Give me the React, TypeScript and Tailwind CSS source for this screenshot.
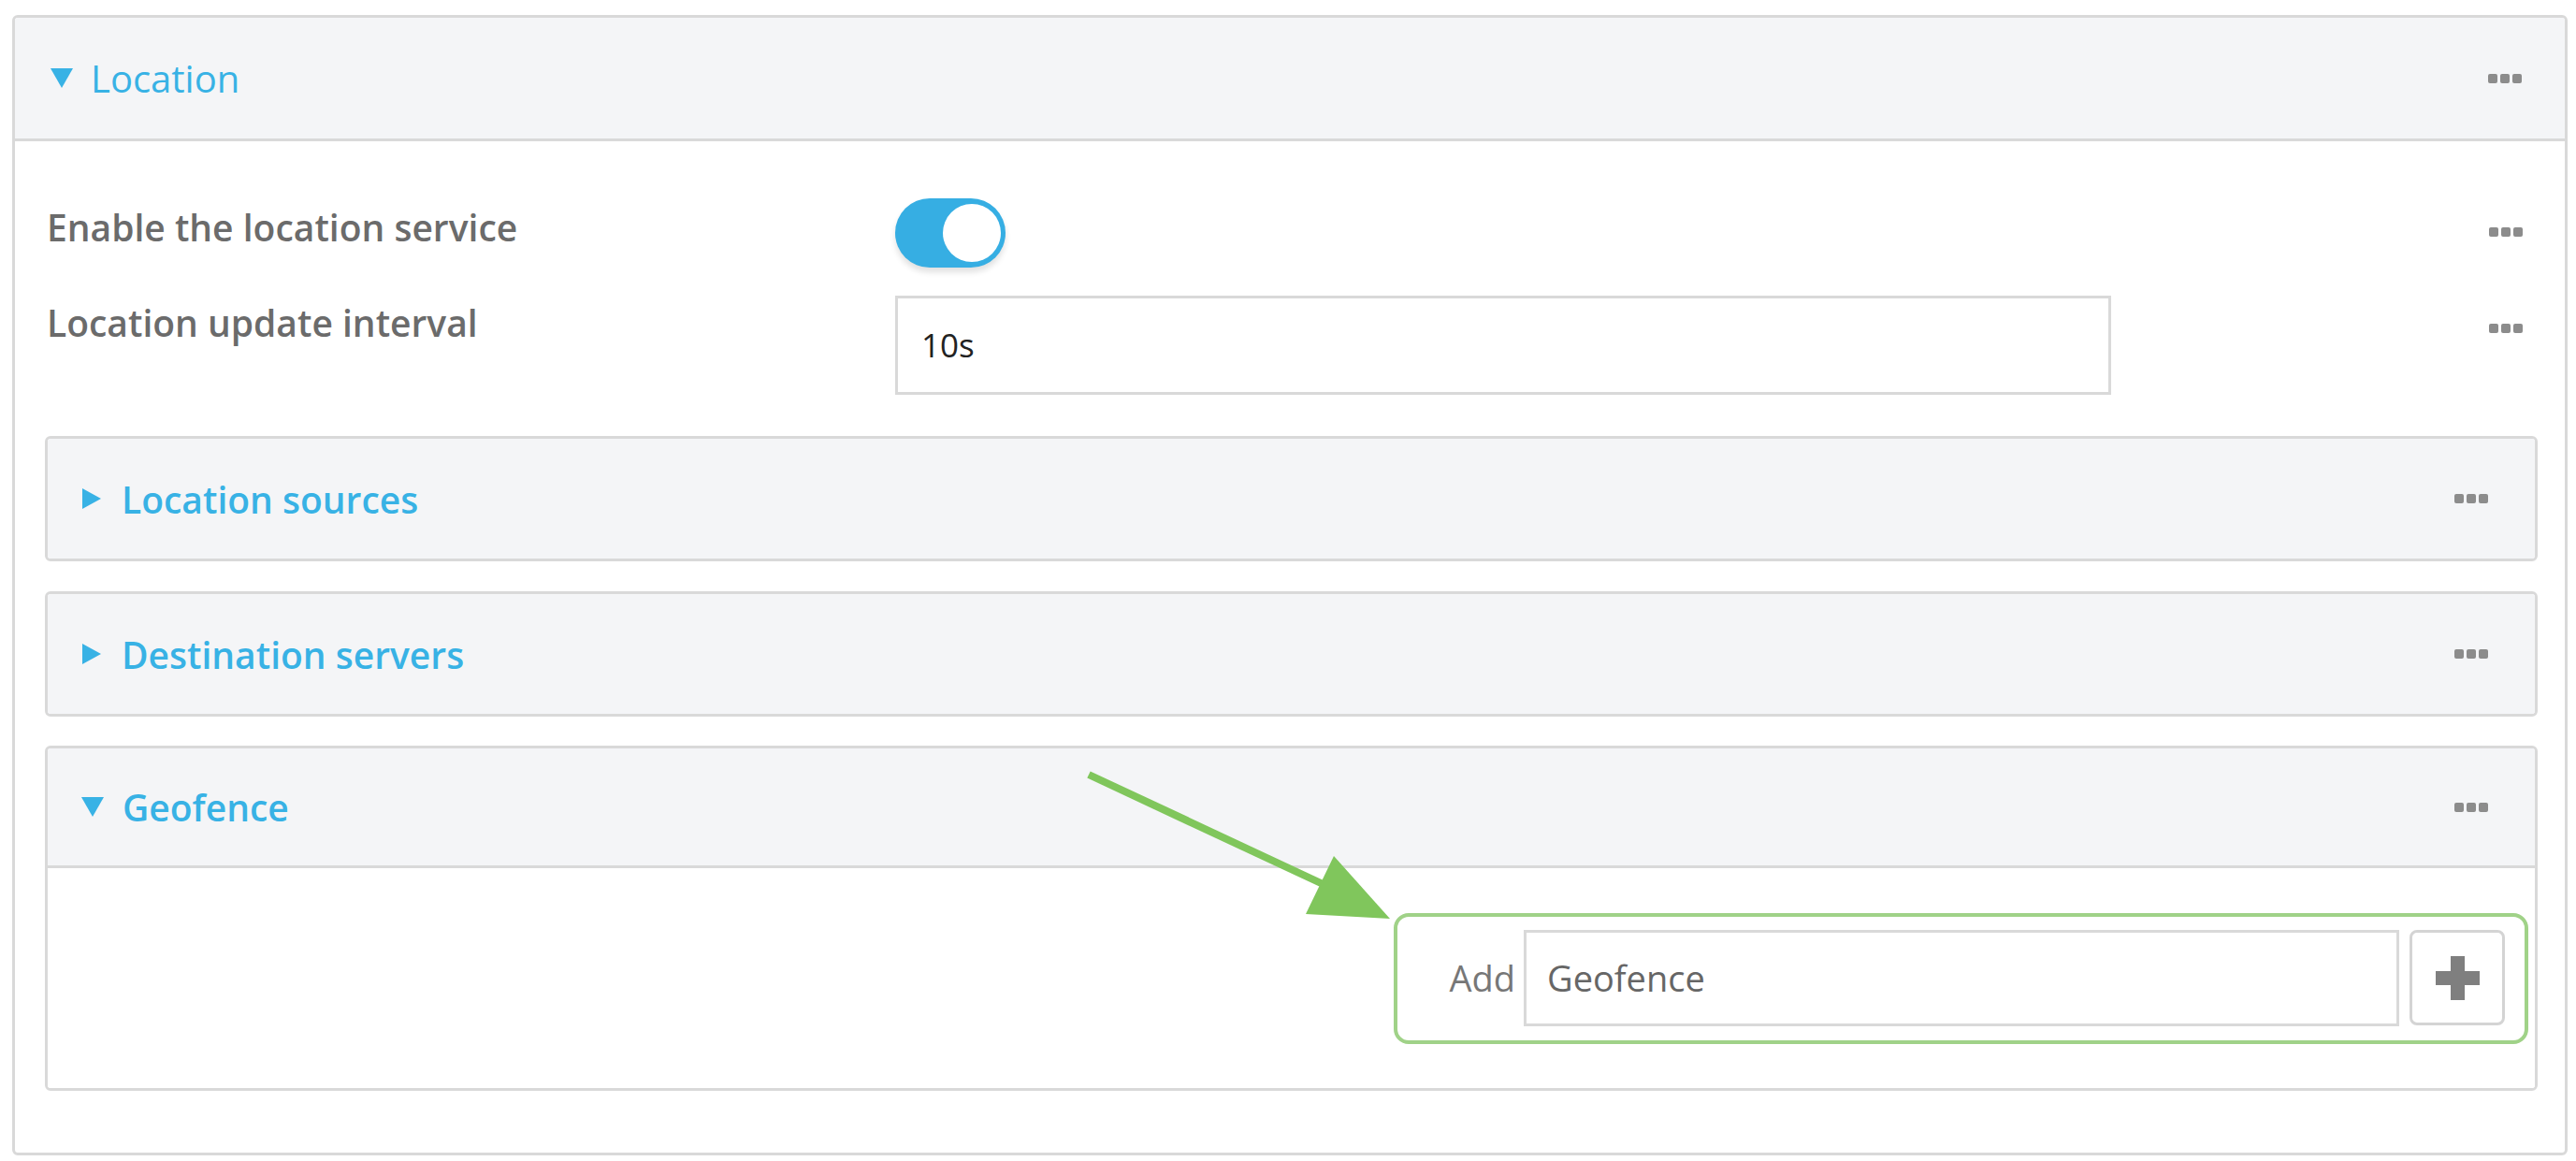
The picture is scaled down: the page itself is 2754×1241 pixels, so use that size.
import React from 'react'

function Dots() {
  return (
    <div className="flex gap-[3px]">
      <span className="w-[10px] h-[10px] rounded-[2px] bg-[#8c8c8c]" />
      <span className="w-[10px] h-[10px] rounded-[2px] bg-[#8c8c8c]" />
      <span className="w-[10px] h-[10px] rounded-[2px] bg-[#8c8c8c]" />
    </div>
  )
}

function Caret({ open }: { open: boolean }) {
  if (open) {
    return (
      <svg width="24" height="21" viewBox="0 0 24 21" className="shrink-0">
        <polygon points="0,0 24,0 12,21" fill="#38b2e5" />
      </svg>
    )
  }
  return (
    <svg width="20" height="22" viewBox="0 0 20 22" className="shrink-0 ml-[1px]">
      <polygon points="0,0 20,11 0,22" fill="#38b2e5" />
    </svg>
  )
}

function SubHeader({ title, open }: { title: string; open: boolean }) {
  return (
    <div
      className={`h-[128px] flex items-center bg-[#f4f5f7] pl-[36px] pr-[50px] ${
        open ? 'border-b-[3px] border-[#d9d9d9]' : ''
      }`}
    >
      <Caret open={open} />
      <span className={`${open ? 'ml-[20px]' : 'ml-[22px]'} text-[39px] font-semibold text-[#38b2e5] leading-none`}>
        {title}
      </span>
      <div className="ml-auto">
        <Dots />
      </div>
    </div>
  )
}

export default function App() {
  return (
    <div className="relative w-[2754px] h-[1241px] bg-white font-['Open_Sans',sans-serif] pt-[16px] pl-[13px]">
      <div className="w-[2732px] border-[3px] border-[#d9d9d9] rounded-[6px] overflow-hidden">
        {/* Location header */}
        <div className="h-[132px] flex items-center bg-[#f4f5f7] border-b-[3px] border-[#d9d9d9] pl-[38px] pr-[46px]">
          <Caret open />
          <span className="ml-[19px] text-[40px] text-[#38b2e5] leading-none">Location</span>
          <div className="ml-auto">
            <Dots />
          </div>
        </div>

        {/* Body */}
        <div className="pt-[61px] pl-[32px] pr-[29px] pb-[66px]">
          <div className="flex items-start h-[74px]">
            <div className="w-[909px] pl-[2px] pt-[4px] text-[39px] leading-[54px] font-semibold text-[#6b6b6b]">
              Enable the location service
            </div>
            <div className="relative w-[118px] h-[74px] rounded-full bg-[#36aee3] shadow-[0_5px_6px_rgba(0,0,0,0.12)]">
              <div className="absolute right-[5px] top-[6px] w-[62px] h-[62px] rounded-full bg-white" />
            </div>
            <div className="ml-auto mt-[31px] mr-[16px]">
              <Dots />
            </div>
          </div>

          <div className="flex items-start mt-[30px]">
            <div className="w-[909px] pl-[2px] pt-[2px] text-[39px] leading-[54px] font-semibold text-[#6b6b6b]">
              Location update interval
            </div>
            <div className="w-[1300px] h-[106px] border-[3px] border-[#d9d9d9] flex items-center pl-[25px] text-[35px] text-[#222]">
              10s
            </div>
            <div className="ml-auto mt-[30px] mr-[16px]">
              <Dots />
            </div>
          </div>

          {/* Location sources */}
          <div className="mt-[44px] border-[3px] border-[#d9d9d9] rounded-[6px] overflow-hidden">
            <SubHeader title="Location sources" open={false} />
          </div>

          {/* Destination servers */}
          <div className="mt-[32px] border-[3px] border-[#d9d9d9] rounded-[6px] overflow-hidden">
            <SubHeader title="Destination servers" open={false} />
          </div>

          {/* Geofence */}
          <div className="mt-[31px] border-[3px] border-[#d9d9d9] rounded-[6px] overflow-hidden">
            <SubHeader title="Geofence" open />
            <div className="h-[235px] bg-white flex items-center justify-end pr-[7px]">
              <div className="flex items-center border-4 border-[#a0d288] rounded-[16px] pl-[55px] pr-[21px] pt-[14px] pb-[15px]">
                <span className="text-[38px] text-[#777]">Add</span>
                <div className="ml-[9px] w-[936px] h-[103px] border-[3px] border-[#d9d9d9] flex items-center pl-[22px] text-[38px] text-[#666]">
                  Geofence
                </div>
                <button className="ml-[11px] w-[102px] h-[102px] border-[3px] border-[#d4d4d4] rounded-[8px] bg-white flex items-center justify-center">
                  <svg width="47" height="47" viewBox="0 0 47 47">
                    <rect x="16" y="0" width="15" height="47" fill="#7f7f7f" />
                    <rect x="0" y="16" width="47" height="15" fill="#7f7f7f" />
                  </svg>
                </button>
              </div>
            </div>
          </div>
        </div>
      </div>

      {/* annotation arrow */}
      <svg className="absolute left-0 top-0 pointer-events-none" width="2754" height="1241" viewBox="0 0 2754 1241">
        <line x1="1164" y1="828" x2="1425" y2="950" stroke="#80c65c" strokeWidth="8" />
        <polygon points="1426,915 1396,977 1486,982" fill="#80c65c" />
      </svg>
    </div>
  )
}
